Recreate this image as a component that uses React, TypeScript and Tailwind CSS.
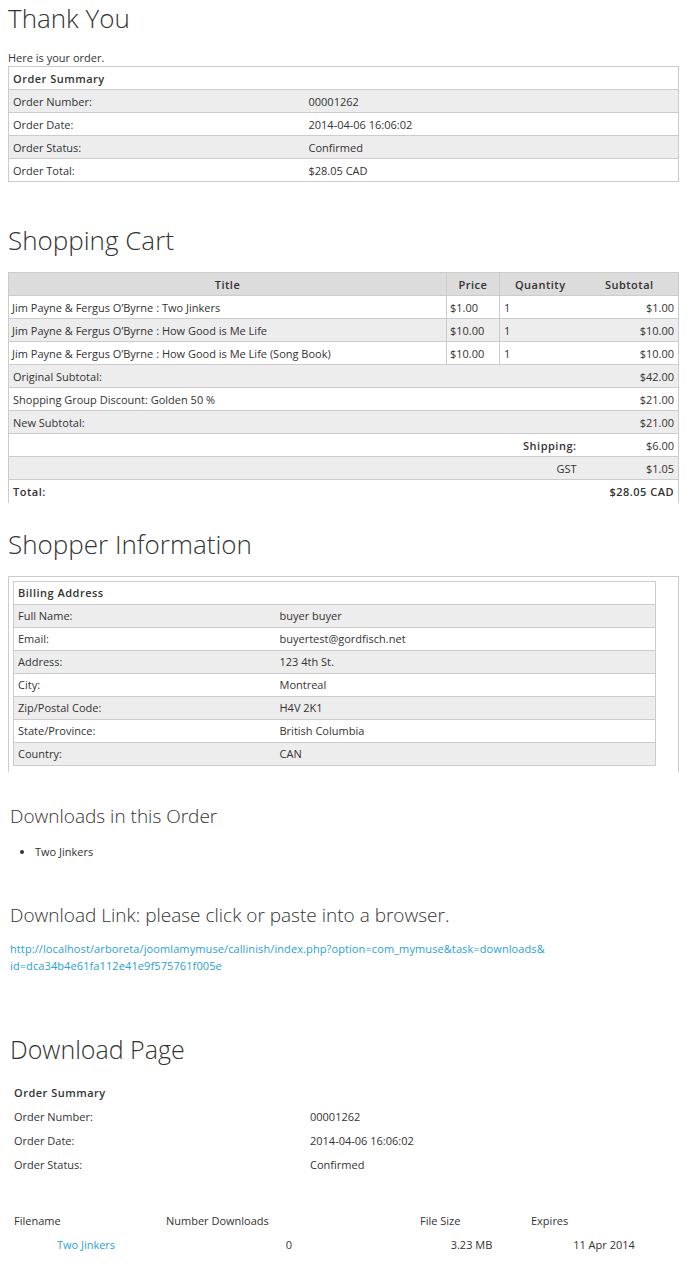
const summary = [
  ['Order Number:', '00001262'],
  ['Order Date:', '2014-04-06 16:06:02'],
  ['Order Status:', 'Confirmed'],
  ['Order Total:', '$28.05 CAD'],
];

const items = [
  ['Jim Payne & Fergus O\u2019Byrne : Two Jinkers', '$1.00', '1', '$1.00'],
  ['Jim Payne & Fergus O\u2019Byrne : How Good is Me Life', '$10.00', '1', '$10.00'],
  ['Jim Payne & Fergus O\u2019Byrne : How Good is Me Life (Song Book)', '$10.00', '1', '$10.00'],
];

const billing = [
  ['Full Name:', 'buyer buyer'],
  ['Email:', 'buyertest@gordfisch.net'],
  ['Address:', '123 4th St.'],
  ['City:', 'Montreal'],
  ['Zip/Postal Code:', 'H4V 2K1'],
  ['State/Province:', 'British Columbia'],
  ['Country:', 'CAN'],
];

export default function App() {
  return (
    <div className="min-h-[1270px] w-[693px] bg-white font-['Open_Sans',sans-serif] text-[11px] leading-[15px] text-[#333]">
      <div className="w-[679px] pl-2">
        <h1 className="pt-[3px] text-[26px] leading-[30px] font-light text-[#333]">Thank You</h1>
        <p className="mt-[17px] mb-[1px]">Here is your order.</p>

        {/* Order summary */}
        <table className="w-full border-collapse border border-[#ccc]">
          <tbody>
            <tr className="h-[23px]">
              <td colSpan={2} className="px-1 font-semibold tracking-[0.5px]">Order Summary</td>
            </tr>
            {summary.map(([label, value], i) => (
              <tr key={label} className={`h-[23px] border-t border-[#ccc] ${i % 2 === 0 ? 'bg-[#ededed]' : 'bg-white'}`}>
                <td className="w-[296px] px-1">{label}</td>
                <td className="px-1">{value}</td>
              </tr>
            ))}
          </tbody>
        </table>

        <h1 className="mt-[43px] text-[26px] leading-[30px] font-light">Shopping Cart</h1>

        {/* Shopping cart */}
        <table className="mt-[17px] w-full border-collapse border-x border-t border-[#ccc]">
          <tbody>
            <tr className="h-[23px] bg-[#dcdcdc] font-semibold tracking-[0.5px]">
              <td className="w-[438px] border-r border-[#ccc] text-center">Title</td>
              <td className="w-[53px] border-r border-[#ccc] text-center">Price</td>
              <td className="w-[81px] text-center">Quantity</td>
              <td className="text-center">Subtotal</td>
            </tr>
            {items.map(([title, price, qty, sub], i) => (
              <tr key={title} className={`h-[23px] border-t border-[#ccc] ${i % 2 === 1 ? 'bg-[#ededed]' : 'bg-white'}`}>
                <td className="border-r border-[#ccc] px-[3px]">{title}</td>
                <td className="border-r border-[#ccc] px-[3px]">{price}</td>
                <td className="px-1">{qty}</td>
                <td className="px-1 text-right">{sub}</td>
              </tr>
            ))}
            <tr className="h-[23px] border-t border-[#ccc] bg-[#ededed]">
              <td colSpan={3} className="px-1">Original Subtotal:</td>
              <td className="px-1 text-right">$42.00</td>
            </tr>
            <tr className="h-[23px] border-t border-[#ccc] bg-white">
              <td colSpan={3} className="px-1">Shopping Group Discount: Golden 50 %</td>
              <td className="px-1 text-right">$21.00</td>
            </tr>
            <tr className="h-[23px] border-t border-[#ccc] bg-[#ededed]">
              <td colSpan={3} className="px-1">New Subtotal:</td>
              <td className="px-1 text-right">$21.00</td>
            </tr>
            <tr className="h-[23px] border-t border-[#ccc] bg-white">
              <td colSpan={3} className="px-1 text-right font-semibold tracking-[0.5px]">Shipping:</td>
              <td className="px-1 text-right">$6.00</td>
            </tr>
            <tr className="h-[23px] border-t border-[#ccc] bg-[#ededed]">
              <td colSpan={3} className="px-1 text-right">GST</td>
              <td className="px-1 text-right">$1.05</td>
            </tr>
            <tr className="h-[23px] border-t border-[#ccc] bg-white font-semibold tracking-[0.5px]">
              <td colSpan={3} className="px-1">Total:</td>
              <td className="px-1 text-right">$28.05 CAD</td>
            </tr>
          </tbody>
        </table>

        <h1 className="mt-[26px] text-[26px] leading-[30px] font-light">Shopper Information</h1>

        {/* Shopper information */}
        <div className="mt-[17px] border-x border-t border-[#ccc] px-1 pt-1 pb-[6px]">
          <table className="w-[643px] border-collapse border border-[#ccc]">
            <tbody>
              <tr className="h-[23px]">
                <td colSpan={2} className="px-1 font-semibold tracking-[0.5px]">Billing Address</td>
              </tr>
              {billing.map(([label, value], i) => (
                <tr key={label} className={`h-[23px] border-t border-[#ccc] ${i % 2 === 0 ? 'bg-[#ededed]' : 'bg-white'}`}>
                  <td className="w-[262px] px-1">{label}</td>
                  <td className="px-1">{value}</td>
                </tr>
              ))}
            </tbody>
          </table>
        </div>
      </div>

      {/* Downloads */}
      <div className="w-[681px] pl-[10px]">
        <h2 className="mt-[32px] text-[19px] leading-[24px] font-light">Downloads in this Order</h2>
        <ul className="mt-[16px] list-disc pl-[25px]">
          <li>Two Jinkers</li>
        </ul>

        <h2 className="mt-[44px] text-[19px] leading-[24px] font-light">Download Link: please click or paste into a browser.</h2>
        <a className="mt-[13px] block leading-[17px] tracking-[0.1px] text-[#2a9fd6]" href="#">
          http://localhost/arboreta/joomlamymuse/callinish/index.php?option=com_mymuse&amp;task=downloads&amp;
          <br />
          id=dca34b4e61fa112e41e9f575761f005e
        </a>

        <h1 className="mt-[60px] text-[25px] leading-[30px] font-light">Download Page</h1>

        <table className="mt-[17px] w-full border-collapse">
          <tbody>
            <tr className="h-[24px]">
              <td colSpan={2} className="px-1 font-semibold tracking-[0.5px]">Order Summary</td>
            </tr>
            {summary.slice(0, 3).map(([label, value]) => (
              <tr key={label} className="h-[24px]">
                <td className="w-[296px] px-1">{label}</td>
                <td className="px-1">{value}</td>
              </tr>
            ))}
          </tbody>
        </table>

        <table className="mt-[32px] w-full border-collapse">
          <tbody>
            <tr className="h-[24px]">
              <td className="w-[152px] px-1">Filename</td>
              <td className="w-[254px] px-1">Number Downloads</td>
              <td className="w-[111px] px-1">File Size</td>
              <td className="px-1">Expires</td>
            </tr>
            <tr className="h-[24px] text-center">
              <td className="px-1">
                <a className="text-[#2a9fd6]" href="#">Two Jinkers</a>
              </td>
              <td className="px-1">0</td>
              <td className="px-1">3.23 MB</td>
              <td className="px-1">11 Apr 2014</td>
            </tr>
          </tbody>
        </table>
      </div>
    </div>
  );
}
